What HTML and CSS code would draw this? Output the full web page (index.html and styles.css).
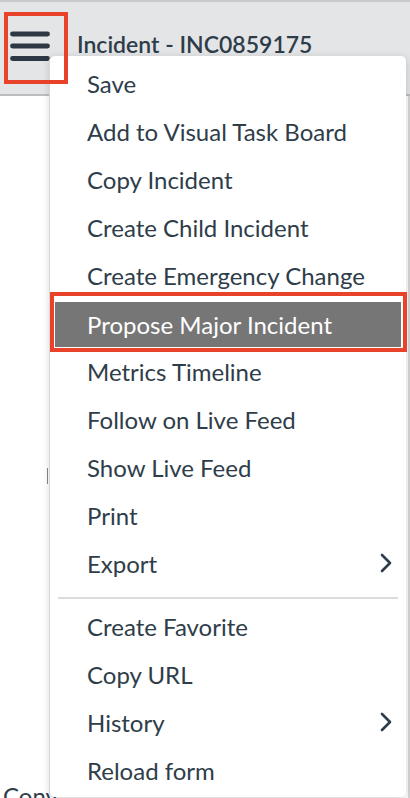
FILE: index.html
```html
<!DOCTYPE html>
<html lang="en">

<head>
    <meta charset="UTF-8">
    <meta name="viewport" content="width=device-width, initial-scale=1.0">
    <title>Incident - INC0859175</title>
    <link rel="stylesheet" href="styles.css">
</head>

<body>
    <div class="page">
        <header class="form-header">
            <button class="menu-toggle" aria-label="Additional actions">
                <svg width="40" height="32" viewBox="0 0 40 32">
                    <line x1="2.5" y1="4" x2="37.5" y2="4" />
                    <line x1="2.5" y1="16" x2="37.5" y2="16" />
                    <line x1="2.5" y1="28.5" x2="37.5" y2="28.5" />
                </svg>
            </button>
            <h1 class="form-title">Incident - INC0859175</h1>
        </header>

        <div class="form-body">
            <span class="caret"></span>
            <div class="form-label">Conv</div>
        </div>

        <ul class="context-menu">
            <li class="menu-item">Save</li>
            <li class="menu-item">Add to Visual Task Board</li>
            <li class="menu-item">Copy Incident</li>
            <li class="menu-item">Create Child Incident</li>
            <li class="menu-item">Create Emergency Change</li>
            <li class="menu-item active">Propose Major Incident</li>
            <li class="menu-item">Metrics Timeline</li>
            <li class="menu-item">Follow on Live Feed</li>
            <li class="menu-item">Show Live Feed</li>
            <li class="menu-item">Print</li>
            <li class="menu-item has-sub">Export
                <svg class="chevron" width="12" height="20" viewBox="0 0 12 20"><polyline points="2,2 10,10 2,18" /></svg>
            </li>
            <li class="menu-divider"></li>
            <li class="menu-item">Create Favorite</li>
            <li class="menu-item">Copy URL</li>
            <li class="menu-item has-sub">History
                <svg class="chevron" width="12" height="20" viewBox="0 0 12 20"><polyline points="2,2 10,10 2,18" /></svg>
            </li>
            <li class="menu-item">Reload form</li>
        </ul>

        <div class="callout callout-toggle"></div>
        <div class="callout callout-item"></div>
    </div>
</body>

</html>
```

FILE: styles.css
```css
:root {
    --text-color: #2e3d49;
    --header-bg: #e4e5e7;
    --callout: #e8432a;
    --active-bg: #767676;
}

* {
    margin: 0;
    padding: 0;
    box-sizing: border-box;
}

body {
    font-family: 'Lato', 'Noto Sans', sans-serif;
    color: var(--text-color);
    background: #fff;
    overflow: hidden;
}

.page {
    position: relative;
    width: 410px;
    height: 798px;
    overflow: hidden;
}

.form-header {
    height: 96px;
    display: flex;
    align-items: flex-start;
    background: var(--header-bg);
    border-top: 2px solid #c9cacc;
    border-bottom: 2px solid #bcbdbf;
}

.menu-toggle {
    width: 64px;
    height: 72px;
    margin: 10px 0 0 4px;
    padding: 18px 0 0 6px;
    display: flex;
    align-items: flex-start;
    background: none;
    border: none;
}

.menu-toggle svg line {
    stroke: #2e3744;
    stroke-width: 4.8;
    stroke-linecap: round;
}

.form-title {
    margin: 27px 0 0 9px;
    font-size: 23px;
    font-weight: 600;
    line-height: 30px;
    color: var(--text-color);
}

.form-body {
    position: relative;
    height: 702px;
    border-right: 2px solid #d6d6d6;
    width: 410px;
}

.caret {
    position: absolute;
    left: 47px;
    top: 372px;
    width: 1px;
    height: 16px;
    background: #888;
}

.form-label {
    position: absolute;
    left: 3px;
    top: 686px;
    font-size: 24px;
    line-height: 28px;
}

.context-menu {
    position: absolute;
    left: 50px;
    top: 56px;
    width: 356px;
    height: 741px;
    padding: 3px 0 2px;
    list-style: none;
    background: #fff;
    border-radius: 5px;
    box-shadow: -1px 0 0 #d8d8d8, 0 2px 8px rgba(0, 0, 0, 0.18);
}

.menu-item {
    height: 48px;
    display: flex;
    align-items: center;
    justify-content: space-between;
    padding: 0 14px 0 37px;
    font-size: 24px;
    white-space: nowrap;
}

.menu-item.active {
    height: 45px;
    margin: 3px 5px 0;
    padding-left: 32px;
    background: var(--active-bg);
    color: #fff;
}

.chevron polyline {
    fill: none;
    stroke: var(--text-color);
    stroke-width: 2.6;
    stroke-linecap: round;
    stroke-linejoin: round;
}

.menu-divider {
    height: 2px;
    margin: 10px 8px 3px;
    background: #dcdcdc;
}

.callout {
    position: absolute;
    border: 4px solid var(--callout);
}

.callout-toggle {
    left: 4px;
    top: 12px;
    width: 64px;
    height: 72px;
}

.callout-item {
    left: 50px;
    top: 292px;
    width: 357px;
    height: 60px;
}
```
